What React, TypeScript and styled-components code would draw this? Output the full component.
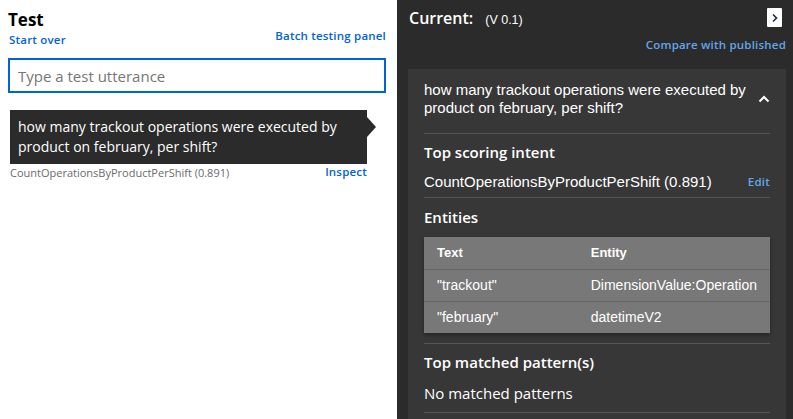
import React from "react";
import styled, { createGlobalStyle } from "styled-components";

const GlobalStyle = createGlobalStyle`
  html, body {
    margin: 0;
    padding: 0;
    background: #ffffff;
  }
  body {
    font-family: "Open Sans", "Noto Sans", sans-serif;
  }
  * {
    box-sizing: border-box;
  }
`;

const Page = styled.div`
  display: flex;
  height: 419px;
  overflow: hidden;
`;

const TestPanel = styled.div`
  width: 397px;
  flex: none;
  background: #ffffff;
  padding: 8px 11px 0 8px;
  display: flex;
  flex-direction: column;
`;

const PanelHeader = styled.div`
  display: flex;
  justify-content: space-between;
  align-items: flex-end;
`;

const TitleBlock = styled.div`
  display: flex;
  flex-direction: column;
`;

const Title = styled.h1`
  margin: 0;
  font-size: 17px;
  line-height: 24px;
  font-weight: 700;
  color: #000000;
`;

const Link = styled.a<{ $dark?: boolean }>`
  font-size: 11.5px;
  line-height: 16px;
  font-weight: 600;
  letter-spacing: 0.2px;
  color: ${(p) => (p.$dark ? "#62a6ea" : "#0063d8")};
  cursor: pointer;
  text-decoration: none;
  white-space: nowrap;
`;

const StartOver = styled(Link)`
  margin-left: 1px;
`;

const BatchLink = styled(Link)`
  margin-bottom: 4px;
`;

const UtteranceInput = styled.input`
  margin-top: 10px;
  width: 378px;
  height: 35px;
  border: 2px solid #0063d8;
  padding: 0 8px;
  font-family: "Open Sans", sans-serif;
  font-size: 15px;
  color: #222;
  outline: none;
  &::placeholder {
    color: #767676;
  }
`;

const Bubble = styled.div`
  position: relative;
  margin: 17px 0 0 2px;
  width: 357px;
  background: #2b2b2b;
  color: #ffffff;
  font-size: 14px;
  line-height: 20px;
  padding: 7px 8px;

  &::after {
    content: "";
    position: absolute;
    right: -9px;
    top: 7px;
    border-left: 9px solid #2b2b2b;
    border-top: 10px solid transparent;
    border-bottom: 10px solid transparent;
  }
`;

const ResultRow = styled.div`
  display: flex;
  justify-content: space-between;
  align-items: flex-start;
  width: 357px;
  margin-left: 2px;
`;

const ResultIntent = styled.span`
  font-size: 11px;
  line-height: 15px;
  color: #6b6b6b;
  margin-top: 1px;
`;

const InspectPanel = styled.div`
  flex: 1;
  background: #2b2b2b;
  padding: 7px 7px 0 11px;
  display: flex;
  flex-direction: column;
`;

const InspectHeader = styled.div`
  display: flex;
  justify-content: space-between;
  align-items: flex-start;
  padding-left: 1px;
`;

const Current = styled.h2`
  margin: 0;
  font-size: 16px;
  line-height: 22px;
  font-weight: 600;
  color: #ffffff;
  display: flex;
  align-items: baseline;
`;

const Version = styled.span`
  font-family: "Liberation Sans", Arial, sans-serif;
  font-size: 12.5px;
  font-weight: 400;
  margin-left: 12px;
`;

const CollapseButton = styled.button`
  width: 15px;
  height: 19px;
  margin: 1px 4px 0 0;
  padding: 0;
  border: none;
  border-radius: 1px;
  background: #ffffff;
  display: flex;
  align-items: center;
  justify-content: center;
  cursor: pointer;
`;

const CompareRow = styled.div`
  display: flex;
  justify-content: flex-end;
  margin-top: 6px;
`;

const Card = styled.div`
  margin-top: 16px;
  flex: 1;
  width: 378px;
  background: #373737;
  padding: 0 16px;
`;

const Section = styled.div<{ $top?: number; $bottom?: number }>`
  padding: ${(p) => p.$top ?? 8}px 0 ${(p) => p.$bottom ?? 8}px;
  border-bottom: 1px solid #555555;
`;

const QuestionRow = styled.div`
  display: flex;
  justify-content: space-between;
  align-items: center;
`;

const Question = styled.div`
  font-family: "Liberation Sans", Arial, sans-serif;
  font-size: 15px;
  line-height: 18px;
  color: #ffffff;
  width: 330px;
`;

const Heading = styled.h3`
  margin: 0 0 10px;
  font-size: 15px;
  line-height: 20px;
  font-weight: 600;
  color: #ffffff;
`;

const IntentRow = styled.div`
  display: flex;
  justify-content: space-between;
  align-items: center;
`;

const Value = styled.span<{ $segoe?: boolean }>`
  font-family: ${(p) =>
    p.$segoe ? `"Open Sans", sans-serif` : `"Liberation Sans", Arial, sans-serif`};
  font-size: 15px;
  line-height: 20px;
  color: #ffffff;
`;

const EntityTable = styled.table`
  width: 346px;
  border-collapse: collapse;
  background: #787878;
  box-shadow: 0 2px 4px rgba(0, 0, 0, 0.35);
  margin-bottom: 1px;
  font-family: "Liberation Sans", Arial, sans-serif;
  color: #ffffff;

  th {
    font-size: 13px;
    font-weight: 700;
    text-align: left;
    height: 32px;
    padding: 0 13px;
  }
  td {
    font-size: 14px;
    height: 32px;
    padding: 0 13px;
    border-top: 1px solid #666666;
  }
  th:first-child,
  td:first-child {
    width: 154px;
  }
`;

const entities = [
  { text: '"trackout"', entity: "DimensionValue:Operation" },
  { text: '"february"', entity: "datetimeV2" },
];

const utterance = "how many trackout operations were executed by product on february, per shift?";

export default function App() {
  return (
    <>
      <GlobalStyle />
      <Page>
        <TestPanel>
          <PanelHeader>
            <TitleBlock>
              <Title>Test</Title>
              <StartOver>Start over</StartOver>
            </TitleBlock>
            <BatchLink>Batch testing panel</BatchLink>
          </PanelHeader>
          <UtteranceInput placeholder="Type a test utterance" />
          <Bubble>{utterance}</Bubble>
          <ResultRow>
            <ResultIntent>CountOperationsByProductPerShift (0.891)</ResultIntent>
            <Link>Inspect</Link>
          </ResultRow>
        </TestPanel>

        <InspectPanel>
          <InspectHeader>
            <Current>
              Current:<Version>(V 0.1)</Version>
            </Current>
            <CollapseButton aria-label="Close">
              <svg width="8" height="10" viewBox="0 0 8 10">
                <path d="M2 1.5 L5.5 5 L2 8.5" fill="none" stroke="#1b2a4a" strokeWidth="1.6" />
              </svg>
            </CollapseButton>
          </InspectHeader>
          <CompareRow>
            <Link $dark>Compare with published</Link>
          </CompareRow>

          <Card>
            <Section $top={12} $bottom={16}>
              <QuestionRow>
                <Question>{utterance}</Question>
                <svg width="12" height="8" viewBox="0 0 12 8">
                  <path d="M1.5 6.5 L6 2 L10.5 6.5" fill="none" stroke="#ffffff" strokeWidth="2" />
                </svg>
              </QuestionRow>
            </Section>

            <Section $bottom={5}>
              <Heading>Top scoring intent</Heading>
              <IntentRow>
                <Value>CountOperationsByProductPerShift (0.891)</Value>
                <Link $dark>Edit</Link>
              </IntentRow>
            </Section>

            <Section $top={9} $bottom={9}>
              <Heading>Entities</Heading>
              <EntityTable>
                <thead>
                  <tr>
                    <th>Text</th>
                    <th>Entity</th>
                  </tr>
                </thead>
                <tbody>
                  {entities.map((e) => (
                    <tr key={e.text}>
                      <td>{e.text}</td>
                      <td>{e.entity}</td>
                    </tr>
                  ))}
                </tbody>
              </EntityTable>
            </Section>

            <Section $bottom={8}>
              <Heading>Top matched pattern(s)</Heading>
              <Value $segoe>No matched patterns</Value>
            </Section>
          </Card>
        </InspectPanel>
      </Page>
    </>
  );
}
